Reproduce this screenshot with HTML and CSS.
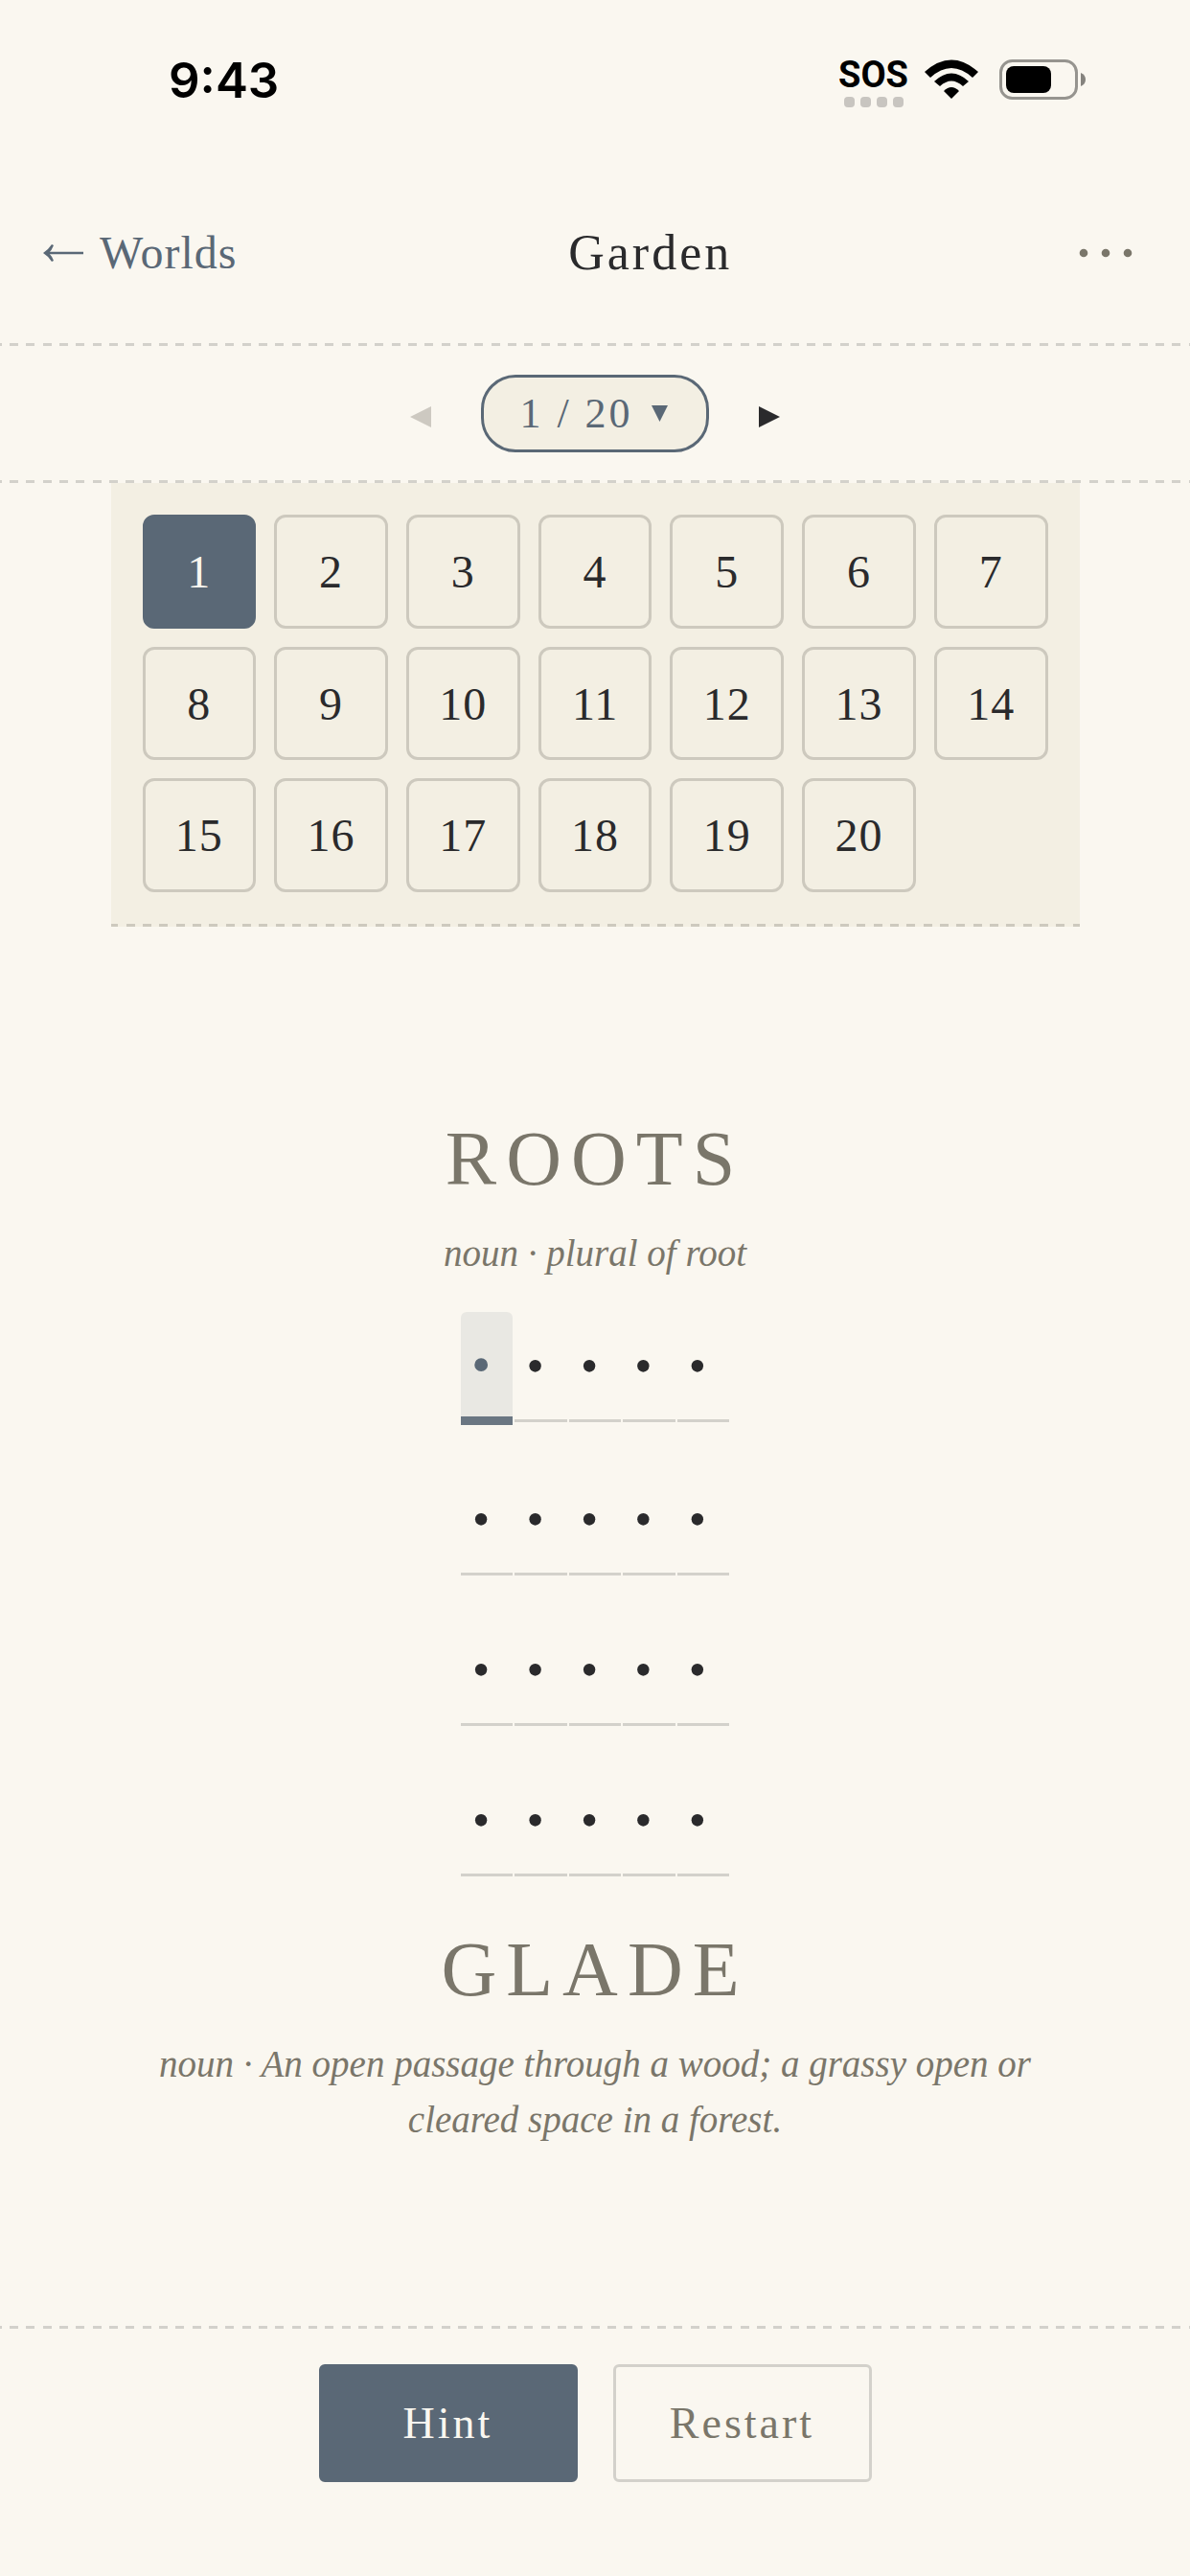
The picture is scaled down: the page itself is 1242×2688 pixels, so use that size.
FILE: index.html
```html
<!DOCTYPE html>
<html lang="en">
<head>
    <meta charset="UTF-8">
    <meta name="viewport" content="width=device-width, initial-scale=1.0">
    <title>Garden</title>
    <link rel="stylesheet" href="styles.css">
</head>
<body>
    <div class="status-bar">
        <span class="time">9:43</span>
        <div class="status-icons">
            <div class="carrier">
                <span class="sos">SOS</span>
                <span class="signal"><i></i><i></i><i></i><i></i></span>
            </div>
            <svg class="wifi" width="56" height="42" viewBox="0 0 56 42">
                <path d="M0 13 Q28 -12 56 13 L50 19 Q28 -1 6 19 Z"/>
                <path d="M10 23 Q28 6 46 23 L40 28 Q28 17 16 28 Z"/>
                <path d="M20 33 Q28 25 36 33 L28 41 Z"/>
            </svg>
            <svg class="battery" width="90" height="42" viewBox="0 0 90 42">
                <rect x="1.5" y="1.5" width="79" height="39" rx="12" fill="none" stroke="#96948f" stroke-width="3"/>
                <rect x="7" y="7" width="47" height="28" rx="8"/>
                <path d="M85 14 Q90 16 90 21 Q90 26 85 28 Z" fill="#85837e"/>
            </svg>
        </div>
    </div>

    <header class="top-bar">
        <a class="back" href="#"><svg width="44" height="20" viewBox="0 0 44 20"><path d="M4 8.8 H43 V11.2 H4 Z"/><path d="M10 1 L12 2 Q10 7 7 10 Q10 13 12 18 L10 19 Q6 13 1 10 Q6 7 10 1 Z"/></svg>Worlds</a>
        <h1>Garden</h1>
        <button class="more" aria-label="More"><svg width="56" height="10" viewBox="0 0 56 10"><circle cx="5" cy="5" r="4.3"/><circle cx="28" cy="5" r="4.3"/><circle cx="51" cy="5" r="4.3"/></svg></button>
    </header>

    <nav class="level-nav">
        <button class="arrow" aria-label="Previous" disabled><svg width="22" height="22" viewBox="0 0 22 22"><path d="M22 0 V22 L0 11 Z"/></svg></button>
        <button class="level-toggle">1 / 20 <svg width="17" height="17" viewBox="0 0 17 17"><path d="M0 0 H17 L8.5 17 Z"/></svg></button>
        <button class="arrow" aria-label="Next"><svg width="22" height="22" viewBox="0 0 22 22"><path d="M0 0 V22 L22 11 Z"/></svg></button>
    </nav>

    <div class="level-panel">
        <button class="level current">1</button>
        <button class="level">2</button>
        <button class="level">3</button>
        <button class="level">4</button>
        <button class="level">5</button>
        <button class="level">6</button>
        <button class="level">7</button>
        <button class="level">8</button>
        <button class="level">9</button>
        <button class="level">10</button>
        <button class="level">11</button>
        <button class="level">12</button>
        <button class="level">13</button>
        <button class="level">14</button>
        <button class="level">15</button>
        <button class="level">16</button>
        <button class="level">17</button>
        <button class="level">18</button>
        <button class="level">19</button>
        <button class="level">20</button>
    </div>

    <main class="puzzle">
        <h2>ROOTS</h2>
        <p class="definition">noun · plural of root</p>
        <div class="ladder">
            <div class="row">
                <button class="cell active">•</button>
                <button class="cell">•</button>
                <button class="cell">•</button>
                <button class="cell">•</button>
                <button class="cell">•</button>
            </div>
            <div class="row">
                <button class="cell">•</button>
                <button class="cell">•</button>
                <button class="cell">•</button>
                <button class="cell">•</button>
                <button class="cell">•</button>
            </div>
            <div class="row">
                <button class="cell">•</button>
                <button class="cell">•</button>
                <button class="cell">•</button>
                <button class="cell">•</button>
                <button class="cell">•</button>
            </div>
            <div class="row">
                <button class="cell">•</button>
                <button class="cell">•</button>
                <button class="cell">•</button>
                <button class="cell">•</button>
                <button class="cell">•</button>
            </div>
        </div>
        <h2>GLADE</h2>
        <p class="definition">noun · An open passage through a wood; a grassy open or cleared space in a forest.</p>
    </main>

    <footer class="actions">
        <button class="hint">Hint</button>
        <button class="restart">Restart</button>
    </footer>
</body>
</html>
```
FILE: styles.css
```css
:root {
    --paper: #faf7f0;
    --panel: #f3efe3;
    --slate: #5a6876;
    --ink: #2a2a2c;
    --muted: #7a766a;
    --line: #d3d1cb;
    /* three dashes per 52px */
    --dashes: repeating-linear-gradient(to right, var(--line) 0 2px, transparent 2px 10px, var(--line) 10px 19px, transparent 19px 27px, var(--line) 27px 36px, transparent 36px 45px, var(--line) 45px 52px);
    --panel-dashes: repeating-linear-gradient(to right, #cdc9be 0 7px, transparent 7px 16px, #cdc9be 16px 25px, transparent 25px 33px, #cdc9be 33px 42px, transparent 42px 50px, #cdc9be 50px 52px);
}
* {
    box-sizing: border-box;
}
body {
    margin: 0;
    min-height: 100vh;
    display: flex;
    flex-direction: column;
    background-color: var(--paper);
    color: var(--ink);
    font-family: "Liberation Serif", serif;
}
button {
    font: inherit;
    color: inherit;
    background: none;
    border: none;
    padding: 0;
    cursor: pointer;
}
svg {
    display: block;
    fill: currentColor;
}
h1, h2, p {
    margin: 0;
    font-weight: normal;
}

/* Status bar */
.status-bar {
    display: flex;
    justify-content: space-between;
    padding: 52px 109px 0 176px;
    height: 162px;
    color: #000;
}
.time {
    font: 600 51px/64px Inter, sans-serif;
}
.status-icons {
    display: flex;
    align-items: flex-start;
    padding-top: 10px;
}
.carrier {
    margin-right: 17px;
}
.sos {
    display: block;
    font: bold 38px/32px Roboto, sans-serif;
}
.signal {
    display: flex;
    justify-content: center;
    gap: 6px;
    margin-top: 7px;
}
.signal i {
    width: 11px;
    height: 11px;
    border-radius: 4px;
    background-color: #c8c5c0;
}
.wifi {
    margin-right: 22px;
}

/* Header */
.top-bar {
    display: flex;
    align-items: center;
    justify-content: space-between;
    height: 199px;
    padding: 4px 44px 0;
    background: var(--dashes) bottom / 100% 3px no-repeat;
}
.back {
    display: flex;
    align-items: center;
    gap: 16px;
    color: var(--slate);
    font-size: 48px;
    letter-spacing: 1px;
    text-decoration: none;
}
h1 {
    font-size: 52px;
    letter-spacing: 3px;
}
.more {
    padding: 16px;
    color: var(--muted);
}

/* Level picker */
.level-nav {
    display: flex;
    align-items: center;
    justify-content: center;
    gap: 52px;
    height: 143px;
    padding-bottom: 3px;
    background: var(--dashes) bottom / 100% 3px no-repeat;
}
.arrow {
    padding-top: 8px;
}
.arrow:disabled {
    color: #cdc9c1;
}
.level-toggle {
    display: flex;
    align-items: center;
    gap: 19px;
    height: 81px;
    padding: 0 40px 0 37px;
    border: 3px solid var(--slate);
    border-radius: 36px;
    background-color: var(--panel);
    color: var(--slate);
    font-size: 44px;
    letter-spacing: 3px;
}
.level-panel {
    display: grid;
    grid-template-columns: repeat(7, 1fr);
    gap: 19px;
    width: 1011px;
    max-width: 100%;
    margin: 0 auto;
    padding: 33px 33px 36px;
    background: var(--panel-dashes) bottom / 100% 3px no-repeat, var(--panel);
}
.level {
    aspect-ratio: 1;
    border: 3px solid #cdc9be;
    border-radius: 12px;
    font-size: 48px;
    letter-spacing: 1px;
}
.level.current {
    background-color: var(--slate);
    border-color: var(--slate);
    color: var(--paper);
}

/* Puzzle */
.puzzle {
    flex: 1;
    display: flex;
    flex-direction: column;
    align-items: center;
    padding: 196px 165px 0;
    color: var(--muted);
    text-align: center;
}
h2 {
    font-size: 80px;
    line-height: 92px;
    letter-spacing: 10px;
}
.definition {
    font-size: 39px;
    line-height: 58px;
    font-style: italic;
    margin-top: 24px;
}
.ladder {
    display: flex;
    flex-direction: column;
    gap: 42px;
    width: 280px;
    margin: 32px 0 51px;
    color: var(--ink);
}
.row {
    display: grid;
    grid-template-columns: repeat(5, 1fr);
    gap: 2px;
    align-items: start;
}
.cell {
    height: 115px;
    border-bottom: 3px solid var(--line);
    font-size: 52px;
    letter-spacing: 12px;
}
.cell.active {
    height: 118px;
    border-bottom: 9px solid #6a7682;
    border-radius: 6px 6px 0 0;
    background-color: #e9e8e3;
    color: var(--slate);
    font-size: 58px;
}

/* Footer */
.actions {
    display: flex;
    justify-content: center;
    gap: 37px;
    padding: 40px 0 98px;
    background: var(--dashes) top / 100% 3px no-repeat;
}
.actions button {
    width: 270px;
    height: 123px;
    border: 3px solid var(--line);
    border-radius: 6px;
    font-size: 46px;
    letter-spacing: 3px;
    color: var(--muted);
}
.actions .hint {
    background-color: var(--slate);
    border-color: var(--slate);
    color: var(--paper);
}
```
